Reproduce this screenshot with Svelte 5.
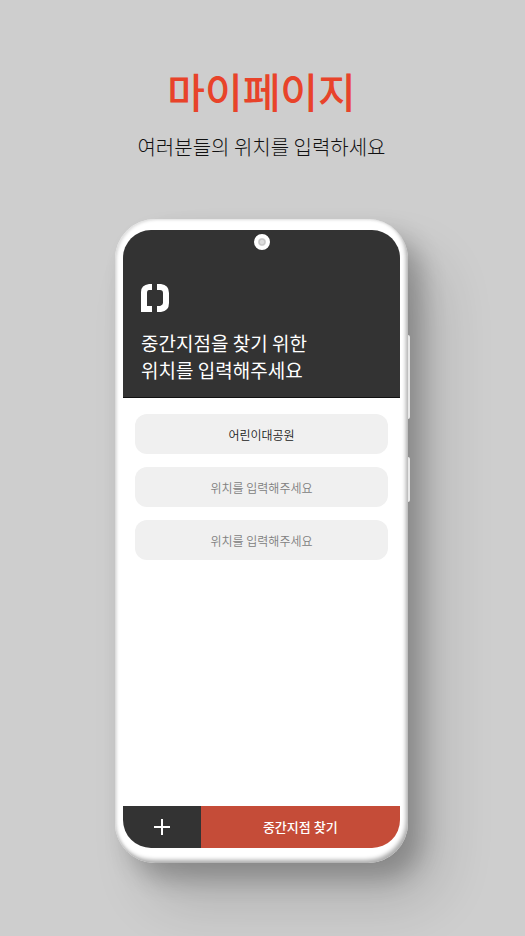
<script>
  let places = $state(['어린이대공원', '', '']);

  function addPlace() {
    places.push('');
  }
</script>

<main>
  <header class="intro">
    <h1>마이페이지</h1>
    <p>여러분들의 위치를 입력하세요</p>
  </header>

  <div class="phone">
    <span class="key volume"></span>
    <span class="key power"></span>
    <form class="screen" onsubmit={(e) => e.preventDefault()}>
      <span class="camera"></span>
      <div class="banner">
        <svg class="logo" viewBox="0 0 28 28" aria-hidden="true">
          <path d="M11 0H8Q0 1 0 8V28H11V22H6V9Q6 6 8 6H11Z" />
          <path d="M16 0H20Q28 1 28 9V19Q28 27 20 28H16V22H19Q22 21 22 19V9Q22 6 19 6H16Z" />
        </svg>
        <h2>중간지점을 찾기 위한<br />위치를 입력해주세요</h2>
      </div>
      <div class="places">
        {#each places as _, i}
          <input
            type="text"
            aria-label={`위치 ${i + 1}`}
            placeholder="위치를 입력해주세요"
            bind:value={places[i]}
          />
        {/each}
      </div>
      <div class="actions">
        <button class="add" type="button" aria-label="위치 추가" onclick={addPlace}>
          <svg viewBox="0 0 16 16" aria-hidden="true"><path d="M8 0V16M0 8H16" /></svg>
        </button>
        <button class="find" type="submit">중간지점 찾기</button>
      </div>
    </form>
  </div>
</main>

<style>
  :global(body) {
    margin: 0;
    background: #cecece;
  }

  main {
    box-sizing: border-box;
    min-height: 100vh;
    padding: 60px 2px 72px 0;
    overflow: hidden;
    display: flex;
    flex-direction: column;
    align-items: center;
    background: #cecece;
    font-family: 'Noto Sans CJK KR', 'Noto Sans', sans-serif;
  }

  .intro {
    text-align: center;
    margin-bottom: 56px;
  }

  h1 {
    margin: 0;
    font-size: 41px;
    line-height: 60px;
    font-weight: 500;
    color: #e8432a;
  }

  .intro p {
    margin: 11px 0 0;
    font-size: 20px;
    line-height: 32px;
    font-weight: 300;
    color: #111;
  }

  .phone {
    position: relative;
    box-sizing: border-box;
    width: 56%;
    max-width: 420px;
    aspect-ratio: 293 / 644;
    padding: 11px 8px 15px;
    display: flex;
    border-radius: 40px;
    background: #fff;
    box-shadow:
      inset -2px -3px 4px #aaa,
      inset 2px 1px 3px #e0e0e0,
      14px 16px 24px rgb(0 0 0 / 24%),
      32px 40px 56px rgb(0 0 0 / 14%);
  }

  .key {
    position: absolute;
    left: 100%;
    width: 2px;
    border-radius: 0 2px 2px 0;
    background: #e8e8e8;
  }

  .volume {
    top: 18%;
    height: 13%;
  }

  .power {
    top: 37%;
    height: 7%;
  }

  .screen {
    position: relative;
    flex: 1;
    min-width: 0;
    display: flex;
    flex-direction: column;
    overflow: hidden;
    border-radius: 28px;
    background: #fff;
  }

  .camera {
    position: absolute;
    top: 4px;
    left: 50%;
    box-sizing: border-box;
    width: 16px;
    height: 16px;
    transform: translateX(-50%);
    border: 4px solid #fff;
    border-radius: 50%;
    background: radial-gradient(circle, #ddd 30%, #c4c4c4 50%, #e8e8e8 80%);
  }

  .banner {
    box-sizing: border-box;
    padding: 54px 18px 14px;
    border-bottom: 1px solid #111;
    background: #333;
    color: #fff;
  }

  .logo {
    display: block;
    width: 28px;
    height: 28px;
    fill: #fff;
  }

  h2 {
    margin: 17px 0 0;
    font-size: 19px;
    line-height: 27px;
    font-weight: 400;
    white-space: nowrap;
  }

  .places {
    flex: 1;
    display: flex;
    flex-direction: column;
    gap: 13px;
    padding: 16px 12px;
  }

  input {
    box-sizing: border-box;
    width: 100%;
    height: 40px;
    padding: 0 12px;
    border: 0;
    border-radius: 12px;
    background: #f0f0f0;
    color: #222;
    font: 350 12px/20px 'Noto Sans CJK KR', sans-serif;
    text-align: center;
  }

  input::placeholder {
    color: #808080;
    opacity: 1;
  }

  .actions {
    display: flex;
    height: 42px;
  }

  button {
    padding: 0;
    border: 0;
    color: #fff;
    font: 500 13px/20px 'Noto Sans CJK KR', sans-serif;
    cursor: pointer;
  }

  .add {
    flex: 0 0 28%;
    display: grid;
    place-items: center;
    background: #333;
  }

  .add svg {
    width: 16px;
    height: 16px;
    stroke: #fff;
    stroke-width: 2;
  }

  .find {
    flex: 1;
    background: #c54c38;
  }
</style>
